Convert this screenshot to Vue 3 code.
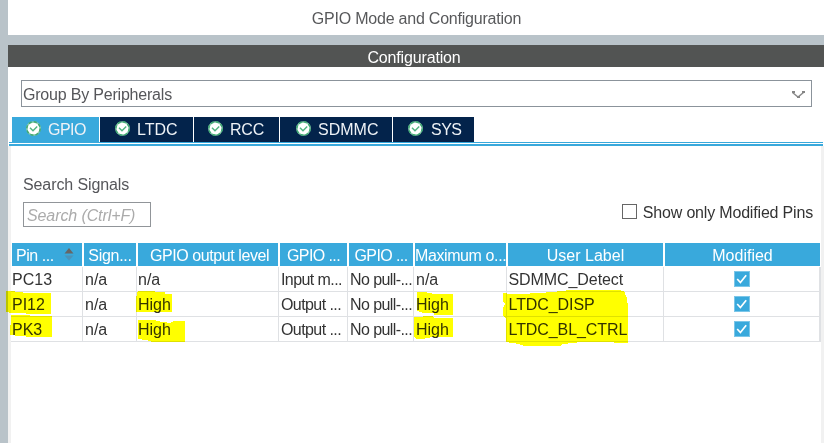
<script setup>
import { ref } from 'vue'

const tabs = [
  { name: 'GPIO', width: 'w-gpio' },
  { name: 'LTDC', width: 'w-ltdc' },
  { name: 'RCC', width: 'w-rcc' },
  { name: 'SDMMC', width: 'w-sdmmc' },
  { name: 'SYS', width: 'w-sys' },
]
const activeTab = ref('GPIO')
const onlyModified = ref(false)

const columns = ['Pin ...', 'Sign...', 'GPIO output level', 'GPIO ...', 'GPIO ...', 'Maximum o...', 'User Label', 'Modified']
const rows = [
  ['PC13', 'n/a', 'n/a', 'Input m...', 'No pull-...', 'n/a', 'SDMMC_Detect'],
  ['PI12', 'n/a', 'High', 'Output ...', 'No pull-...', 'High', 'LTDC_DISP'],
  ['PK3', 'n/a', 'High', 'Output ...', 'No pull-...', 'High', 'LTDC_BL_CTRL'],
]
</script>

<template>
  <main class="window">
    <header class="title">GPIO Mode and Configuration</header>
    <section class="config">
      <h2 class="bar">Configuration</h2>
      <div class="group-row">
        <div class="select">
          <span>Group By Peripherals</span>
          <svg class="chevron" width="14" height="8" viewBox="0 0 14 8">
            <path d="M1.5 1.5 L7 6 L12.5 1.5" fill="none" stroke="#8c8c8c" stroke-width="1.5" />
            <path d="M1 0h3v2H1zM11 0h3v2h-3zM6 5h3v2H6z" fill="#858585" />
          </svg>
        </div>
      </div>
      <nav class="tabs">
        <button
          v-for="tab in tabs"
          :key="tab.name"
          class="tab"
          :class="[tab.width, { active: tab.name === activeTab }]"
          @click="activeTab = tab.name"
        >
          <svg width="15" height="15" viewBox="0 0 15 15">
            <circle cx="7.5" cy="7.5" r="6.6" fill="#fff" stroke="#8fcfae" stroke-width="1.5" />
            <circle cx="7.5" cy="7.5" r="6.7" fill="none" stroke="#3fa873" stroke-width="1.5" stroke-dasharray="3.2 2.06" />
            <path d="M4 6.8 L7 9.8 L11.2 5.6" fill="none" stroke="#50b480" stroke-width="1.4" />
          </svg>
          <span>{{ tab.name }}</span>
        </button>
      </nav>
      <div class="rule"></div>
      <div class="panel">
        <div class="filters">
          <div class="search">
            <label for="search">Search Signals</label>
            <input id="search" type="text" placeholder="Search (Ctrl+F)" />
          </div>
          <label class="only">
            <input v-model="onlyModified" type="checkbox" />
            <span>Show only Modified Pins</span>
          </label>
        </div>
        <div class="grid head">
          <div v-for="(c, i) in columns" :key="i" class="th" :class="'h' + i">
            <span>{{ c }}</span>
            <svg v-if="i === 0" class="sort" width="10" height="13" viewBox="0 0 10 13">
              <path d="M5 0 L9.5 5.5 H.5z" fill="#666" />
              <path d="M.5 7.5 H9.5 L5 12.5z" fill="#4b93b9" />
            </svg>
          </div>
        </div>
        <div v-for="(r, n) in rows" :key="n" class="grid row">
          <div v-for="(v, i) in r" :key="i" class="td" :class="'c' + i"><span>{{ v }}</span></div>
          <div class="td mark">
            <svg width="16" height="16" viewBox="0 0 16 16">
              <rect x=".5" y=".5" width="15" height="15" fill="#39a9dc" stroke="#7cc6e8" />
              <path d="M3.2 8 L6.4 11.5 L12.2 4.3" fill="none" stroke="#fff" stroke-width="1.7" />
            </svg>
          </div>
        </div>
      </div>
    </section>
    <svg class="marker" width="824" height="443" viewBox="0 0 824 443" shape-rendering="crispEdges">
      <path d="M6 291H13L16 292L30 293H51V314H30L22 313H12L6 312z" />
      <path d="M11 315H30V316H52V337H31L10 335V325H11z" />
      <path d="M138 291H155V292H165V294H172V312H136V300L137 292z" />
      <path d="M138 320H156V321L170 323L174 321H185V342H152L146 340L138 339z" />
      <path d="M417 292H425L434 294H453V315H434V313H423L417 311z" />
      <path d="M414 317H423V316H433L434 318H453V337H433L422 339H416L414 337z" />
      <path d="M503 293H507V294H520L540 293L562 291L570 290H617L624 291L627 298L628 307V343H615L613 342H582L563 344L560 346H524L519 344L506 342V318L503 316V308L505 304L503 301z" />
    </svg>
  </main>
</template>

<style>
body {
  margin: 0;
}
</style>

<style scoped>
.window {
  position: relative;
  box-sizing: border-box;
  width: 824px;
  height: 443px;
  overflow: hidden;
  padding-left: 8px;
  background: #b9c3c9;
  font: 16px/20px "Liberation Sans", Arial, sans-serif;
  color: #333;
  display: flex;
  flex-direction: column;
  gap: 10px;
}
.title {
  height: 35px;
  line-height: 37px;
  box-sizing: border-box;
  padding-left: 1px;
  background: #fff;
  text-align: center;
  color: #58595b;
  letter-spacing: -0.22px;
}
.config {
  flex: 1;
  background: #fff;
  display: flex;
  flex-direction: column;
}
.bar {
  margin: 0;
  height: 22px;
  background: #525453;
  color: #fff;
  font-size: 16px;
  font-weight: 400;
  line-height: 25px;
  text-align: center;
  padding-right: 4px;
  letter-spacing: -0.15px;
}
.group-row {
  padding: 13px 12px 10px 13px;
}
.select {
  box-sizing: border-box;
  height: 27px;
  border: 1px solid #8b939b;
  padding: 2px 6px 0 1px;
  display: flex;
  align-items: center;
  justify-content: space-between;
  color: #55565a;
  letter-spacing: -0.2px;
}
.tabs {
  display: flex;
  gap: 1px;
  padding-left: 4px;
  height: 25px;
}
.tab {
  box-sizing: border-box;
  border: 0;
  margin: 0;
  padding: 0 0 0 14px;
  display: flex;
  align-items: center;
  gap: 7px;
  background: #03234b;
  color: #eef2f6;
  font: 16px/20px "Liberation Sans", Arial, sans-serif;
}
.tab svg {
  margin-top: -2px;
}
.tab.active {
  background: #39a9dc;
}
.w-gpio { width: 87px; letter-spacing: -0.5px; }
.w-ltdc { width: 93px; padding-left: 15px; }
.w-rcc { width: 85px; letter-spacing: -0.2px; }
.w-sdmmc { width: 112px; padding-left: 16px; }
.w-sys { width: 81px; padding-left: 15px; gap: 8px; letter-spacing: -0.5px; }
.rule {
  height: 1px;
  margin: 0 1px;
  border-top: 1px solid #39a9dc;
  border-bottom: 2px solid #39a9dc;
}
.panel {
  flex: 1;
  border-left: 3px solid #f1f1f1;
  border-right: 3px solid #f1f1f1;
}
.filters {
  height: 97px;
  display: flex;
  justify-content: space-between;
}
.search {
  display: flex;
  flex-direction: column;
  gap: 7px;
  padding: 29px 0 0 12px;
  color: #55565a;
  letter-spacing: -0.1px;
}
.search input {
  box-sizing: border-box;
  width: 128px;
  height: 25px;
  border: 1px solid #919599;
  padding: 2px 2px 0 3px;
  font: italic 16px/20px "Liberation Sans", Arial, sans-serif;
  letter-spacing: -0.1px;
}
.search input::placeholder {
  color: #ababab;
  opacity: 1;
}
.only {
  display: flex;
  align-items: flex-start;
  gap: 6px;
  padding: 57px 8px 0 0;
  letter-spacing: -0.18px;
}
.only input {
  appearance: none;
  box-sizing: border-box;
  width: 15px;
  height: 15px;
  margin: 1px 0 0;
  border: 1px solid #666;
  background: #fff;
}
.grid {
  display: grid;
  grid-template-columns: 72px 54px 142px 69px 66px 93px 157px 156px;
}
.head {
  padding-left: 1px;
  height: 23px;
}
.th {
  display: flex;
  align-items: center;
  justify-content: center;
  margin-right: 2px;
  padding-top: 2px;
  background: #39a9dc;
  color: #fff;
  white-space: nowrap;
}
.h0 {
  justify-content: space-between;
  padding-left: 4px;
  padding-right: 8px;
  letter-spacing: -0.45px;
}
.h1 {
  letter-spacing: -0.3px;
}
.h2 {
  letter-spacing: -0.42px;
  padding-left: 3px;
}
.h3, .h4 {
  letter-spacing: -0.6px;
}
.h5 {
  justify-content: flex-start;
  letter-spacing: -0.4px;
}
.h7 {
  margin-right: 1px;
}
.sort {
  margin-top: -3px;
}
.row {
  grid-template-columns: 72px 54px 142px 69px 66px 93px 157px 157px;
  height: 25px;
  border-bottom: 1px solid #dfe1e4;
  box-sizing: border-box;
}
.row:nth-child(3) {
  height: 26px;
  padding-top: 1px;
}
.td {
  box-sizing: border-box;
  height: 24px;
  border-right: 1px solid #dfe1e4;
  line-height: 26px;
  padding-left: 1px;
  white-space: nowrap;
}
.c1, .c3, .c4, .c5, .c6 {
  padding-left: 2px;
}
.c3, .c4 {
  letter-spacing: -0.58px;
}
.c6 {
  padding-left: 1.5px;
  letter-spacing: -0.08px;
}
.mark {
  display: flex;
  justify-content: center;
  align-items: center;
  border-right-width: 2px;
}
.marker {
  position: absolute;
  left: 0;
  top: 0;
  pointer-events: none;
  mix-blend-mode: multiply;
  fill: #ff0;
}
</style>
